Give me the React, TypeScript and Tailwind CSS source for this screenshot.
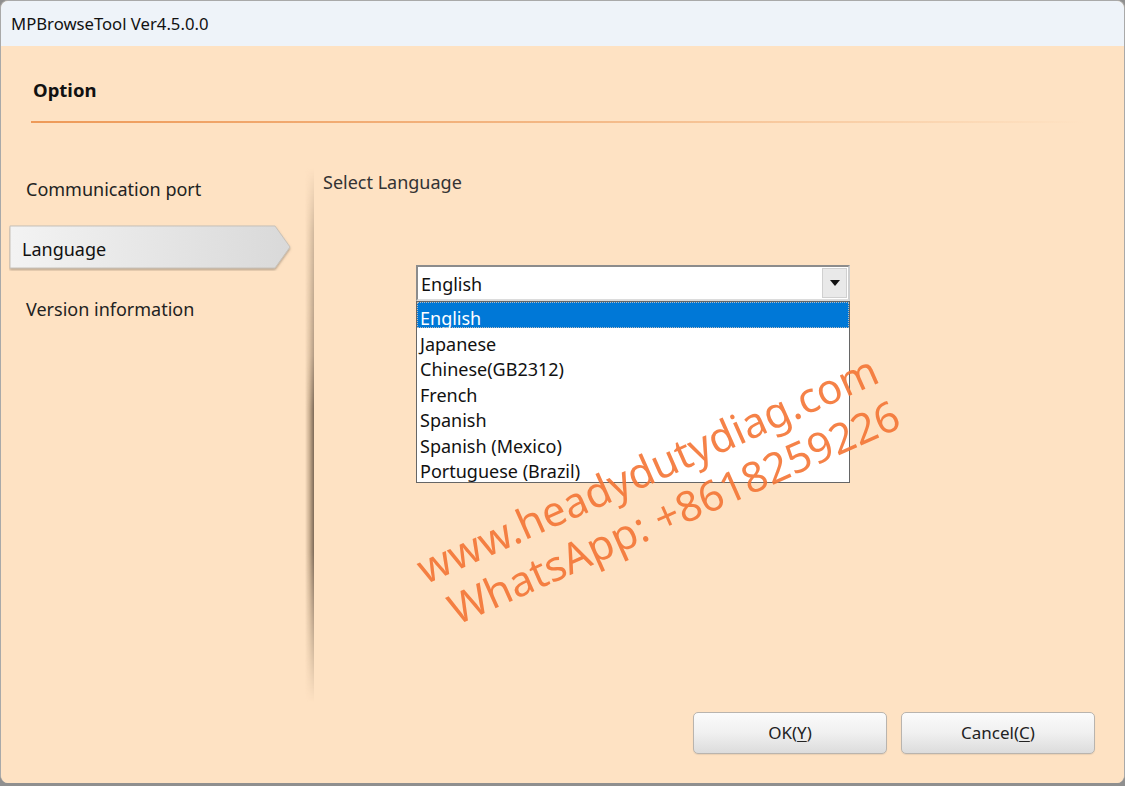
import React from "react";

const FONT = "font-['Noto_Sans','Open_Sans',sans-serif]";

const languages = [
  "English",
  "Japanese",
  "Chinese(GB2312)",
  "French",
  "Spanish",
  "Spanish (Mexico)",
  "Portuguese (Brazil)",
];

function NavItem({ label }: { label: string }) {
  return (
    <div className="h-[60px] flex items-center pl-[25px] text-[18px] text-[#222]">{label}</div>
  );
}

function SelectedNavItem({ label }: { label: string }) {
  return (
    <div className="relative h-[60px] flex items-center">
      <svg className="absolute left-[8px] top-[6px]" width="284" height="46" viewBox="0 0 284 46">
        <defs>
          <linearGradient id="tabFill" x1="0" y1="0" x2="1" y2="0">
            <stop offset="0" stopColor="#f3f3f3" />
            <stop offset="1" stopColor="#d9d9d9" />
          </linearGradient>
          <filter id="tabShadow" x="-5%" y="-20%" width="110%" height="150%">
            <feDropShadow dx="0" dy="1.5" stdDeviation="1.2" floodColor="#7a6a5a" floodOpacity="0.55" />
          </filter>
        </defs>
        <polygon
          points="1,1 266,1 281,22 266,43 1,43"
          fill="url(#tabFill)"
          stroke="#c8c2ba"
          strokeWidth="1"
          filter="url(#tabShadow)"
        />
      </svg>
      <span className="relative pl-[21px] text-[18px] text-[#111]">{label}</span>
    </div>
  );
}

function Button({ label, mnemonic }: { label: string; mnemonic: string }) {
  return (
    <button className="w-[194px] h-[42px] rounded-[5px] border border-[#b9b4ae] bg-gradient-to-b from-[#fbfbfb] via-[#f0f0f0] to-[#dcdcdc] shadow-[0_1px_1px_rgba(0,0,0,0.08)] text-[17px] text-[#222] flex items-center justify-center">
      {label}(<span className="underline underline-offset-2">{mnemonic}</span>)
    </button>
  );
}

export default function App() {
  return (
    <div className={`${FONT} w-[1125px] h-[786px] bg-[#8f8f8f] overflow-hidden`}>
      <div className="h-[783px] rounded-t-[8px] rounded-b-[8px] border-t border-x border-[#a9a9a9] overflow-hidden flex flex-col bg-[#fee2c3]">
        {/* title bar */}
        <div className="h-[45px] shrink-0 bg-[#eef3f9] flex items-center pl-[10px] text-[16.7px] text-[#111]">
          MPBrowseTool Ver4.5.0.0
        </div>

        {/* dialog body */}
        <div className="relative flex-1 flex flex-col bg-[#fee2c3]">
          <div className="h-[75px] pl-[32px] pt-[30px] text-[18.5px] font-bold text-[#111]">Option</div>
          <div className="ml-[30px] mr-[40px] h-[2px] bg-gradient-to-r from-[#ee9a58] via-[#f3b784] to-transparent" />

          <div className="flex flex-1">
            <div className="w-[304px] shrink-0 pt-[36px] flex flex-col">
              <NavItem label="Communication port" />
              <SelectedNavItem label="Language" />
              <NavItem label="Version information" />
            </div>

            {/* shaded separator */}
            <div className="w-[9px] shrink-0 mt-[45px] mb-[6px] bg-gradient-to-r from-transparent via-[#c9ae90] to-[#7d6a58] [mask-image:linear-gradient(to_bottom,transparent_0%,rgba(0,0,0,0.35)_12%,rgba(0,0,0,0.6)_35%,black_45%,black_72%,transparent_100%)]" />

            <div className="flex-1 pt-[46px] pl-[9px]">
              <div className="text-[18px] text-[#333]">Select Language</div>

              <div className="ml-[93px] mt-[69px] w-[434px]">
                <div className="h-[36px] border-2 border-[#8c8c8c] border-r-[#cfcfcf] border-b-[#dcdcdc] bg-white flex items-center">
                  <span className="flex-1 pl-[3px] pt-[3px] text-[18px] text-[#111]">English</span>
                  <div className="w-[25px] h-[30px] mr-[1px] bg-[#e9e9e9] border border-[#d0d0d0] flex items-center justify-center">
                    <svg width="10" height="6" viewBox="0 0 10 6">
                      <polygon points="0,0 10,0 5,6" fill="#111" />
                    </svg>
                  </div>
                </div>
                <div className="border border-[#666] bg-white pb-[1px]">
                  {languages.map((lang, i) =>
                    i === 0 ? (
                      <div
                        key={lang}
                        className="h-[25.5px] bg-[#0078d7] outline-1 outline-dotted outline-[#bbb] -outline-offset-1 pl-[3px] pt-[8px] text-[18px] leading-[17.5px] text-white"
                      >
                        {lang}
                      </div>
                    ) : (
                      <div key={lang} className="h-[25.5px] pl-[3px] pt-[8px] text-[18px] leading-[17.5px] text-[#111]">
                        {lang}
                      </div>
                    )
                  )}
                </div>
              </div>
            </div>
          </div>

          <div className="h-[75px] flex justify-end items-start gap-[14px] pr-[29px] pt-[4px]">
            <Button label="OK" mnemonic="Y" />
            <Button label="Cancel" mnemonic="C" />
          </div>

          {/* contact stamp laid over the dialog */}
          <div className="pointer-events-none absolute left-[428px] top-[497px] origin-left -rotate-[24deg] text-[42px] leading-[50px] text-[#f47535] opacity-90 whitespace-nowrap">
            <div>www.headydutydiag.com</div>
            <div className="pl-[12px]">WhatsApp: +8618259226</div>
          </div>
        </div>
      </div>
    </div>
  );
}
